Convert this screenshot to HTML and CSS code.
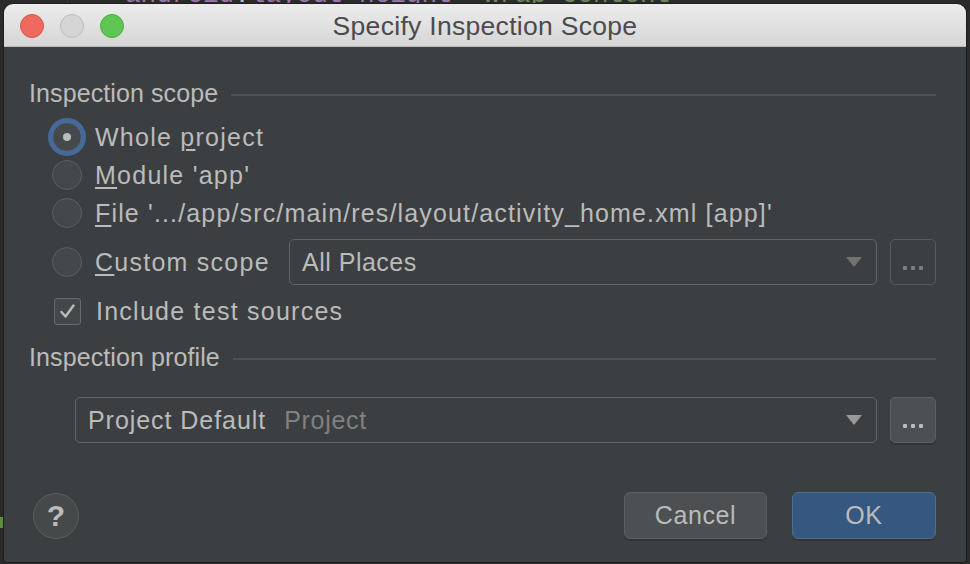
FILE: index.html
```html
<!DOCTYPE html>
<html>
<head>
<meta charset="utf-8">
<link rel="stylesheet" href="styles.css">
</head>
<body>
<div class="editor">
  <div class="gutter-line"></div>
  <div class="code-line"><span class="attr">android</span><span class="punct">:</span><span class="attr">layout_height</span><span class="punct">=</span><span class="str">"wrap_content"</span></div>
  <div class="code-mark"></div>
</div>

<div class="dialog">
  <div class="titlebar">
    <div class="lights">
      <span class="light red"></span>
      <span class="light gray"></span>
      <span class="light green"></span>
    </div>
    <div class="title">Specify Inspection Scope</div>
  </div>

  <div class="body">
    <div class="group-head">
      <span class="group-title">Inspection scope</span>
      <span class="group-line"></span>
    </div>

    <div class="row row-first">
      <span class="radio selected"><span class="dot"></span></span>
      <span class="label">Whole <u>p</u>roject</span>
    </div>
    <div class="row">
      <span class="radio"></span>
      <span class="label"><u>M</u>odule 'app'</span>
    </div>
    <div class="row">
      <span class="radio"></span>
      <span class="label label-file"><u>F</u>ile '.../app/src/main/res/layout/activity_home.xml [app]'</span>
    </div>
    <div class="row row-combo">
      <span class="radio"></span>
      <span class="label label-fixed"><u>C</u>ustom scope</span>
      <div class="combo">
        <span class="combo-text">All Places</span>
        <span class="arrow arrow-dim"></span>
      </div>
      <div class="ellipsis disabled"><i></i><i></i><i></i></div>
    </div>
    <div class="row row-check">
      <span class="checkbox">
        <svg width="19" height="19" viewBox="0 0 19 19"><path d="M3.5 10 L7.5 14.5 L15.5 3.5" fill="none" stroke="#bbbbbb" stroke-width="2.4" stroke-linecap="round" stroke-linejoin="round"/></svg>
      </span>
      <span class="label">Include test sources</span>
    </div>

    <div class="group-head group-head-2">
      <span class="group-title">Inspection profile</span>
      <span class="group-line"></span>
    </div>

    <div class="row-profile">
      <div class="combo combo-profile">
        <span class="combo-text">Project Default</span>
        <span class="combo-sub">Project</span>
        <span class="arrow"></span>
      </div>
      <div class="ellipsis"><i></i><i></i><i></i></div>
    </div>

    <div class="footer">
      <div class="help">?</div>
      <div class="buttons">
        <div class="btn">Cancel</div>
        <div class="btn btn-primary">OK</div>
      </div>
    </div>
  </div>
</div>
</body>
</html>
```

FILE: styles.css
```css
html, body {
  margin: 0;
  padding: 0;
  width: 970px;
  height: 564px;
  overflow: hidden;
  background: #2b2b2b;
}

.editor {
  position: relative;
  height: 564px;
  padding-top: 1px;
  box-sizing: border-box;
}

.gutter-line {
  position: absolute;
  left: 67px;
  top: 0;
  width: 1px;
  height: 8px;
  background: #3a3a3a;
}

.code-mark {
  position: absolute;
  left: 0;
  top: 517px;
  width: 3px;
  height: 11px;
  background: #5d8f3b;
}

.code-line {
  margin-top: -19px;
  margin-left: 125px;
  font-family: "Liberation Mono", monospace;
  font-size: 26px;
  line-height: 26px;
  white-space: nowrap;
}
.attr { color: #9876aa; }
.punct { color: #a9b7c6; }
.str { color: #6a8759; }

.dialog {
  position: absolute;
  left: 4px;
  top: 4px;
  width: 962px;
  height: 558px;
  background: #3c3f41;
  border-radius: 9px 9px 3px 3px;
  overflow: hidden;
  font-family: "Liberation Sans", Arial, sans-serif;
  color: #bbbbbb;
  box-shadow: 0 0 0 1px #1e1e1e;
}

.titlebar {
  height: 42px;
  border-bottom: 1px solid #b9b9b9;
  background: linear-gradient(#ececec, #d6d6d6);
  display: flex;
  align-items: center;
  position: relative;
}

.lights {
  display: flex;
  gap: 16px;
  padding-left: 16px;
  position: absolute;
  left: 0;
  top: 10px;
}
.light {
  width: 22px;
  height: 22px;
  border-radius: 50%;
  border: 1px solid;
}
.red { background: #ee6a5e; border-color: #d8554a; }
.gray { background: #d5d5d5; border-color: #bcbcbc; }
.green { background: #5ec653; border-color: #4aac3f; }

.title {
  flex: 1;
  text-align: center;
  font-size: 26.5px;
  letter-spacing: 0.3px;
  color: #4b4b4b;
  padding-top: 3px;
}

.body {
  padding: 31px 30px 0 25px;
}

.group-head {
  display: flex;
  align-items: center;
  height: 30px;
  font-size: 25px;
  line-height: 30px;
}
.group-title {
  flex: none;
  white-space: nowrap;
  letter-spacing: 0.1px;
}
.group-line {
  flex: 1;
  height: 2px;
  background: #4f5254;
  margin-left: 13px;
  margin-top: 4px;
}

.row {
  display: flex;
  align-items: center;
  height: 38px;
  font-size: 25px;
  line-height: 38px;
}
.row-first {
  margin-top: 10px;
}
.label {
  letter-spacing: 1.25px;
  white-space: nowrap;
}
.label-file {
  letter-spacing: 1.15px;
}
.label u {
  text-decoration-thickness: 1.5px;
  text-underline-offset: 3px;
}

.radio {
  flex: none;
  width: 28px;
  height: 28px;
  border: 1px solid #5c5f60;
  border-radius: 50%;
  background: #43494a;
  margin-left: 23px;
  margin-right: 13px;
  display: flex;
  align-items: center;
  justify-content: center;
}
.radio.selected {
  border-color: #4b6f98;
  box-shadow: 0 0 0 4px #45699a;
  background: #45494b;
}
.dot {
  width: 8px;
  height: 8px;
  border-radius: 50%;
  background: #bbbbbb;
}

.row-combo {
  height: 46px;
  margin-top: 7px;
}
.label-fixed {
  width: 194px;
  flex: none;
}

.combo {
  flex: 1;
  height: 44px;
  border: 1px solid #626466;
  border-radius: 5px;
  display: flex;
  align-items: center;
  padding: 0 14px 0 12px;
  font-size: 25px;
}
.combo-text {
  letter-spacing: 0.5px;
  color: #bbbbbb;
  white-space: nowrap;
}
.combo-sub {
  margin-left: 18px;
  letter-spacing: 0.7px;
  color: #808080;
}
.arrow {
  margin-left: auto;
  width: 0;
  height: 0;
  border-left: 8px solid transparent;
  border-right: 8px solid transparent;
  border-top: 10px solid #999999;
}
.arrow-dim {
  border-top-color: #717171;
}

.ellipsis {
  flex: none;
  margin-left: 13px;
  border: 1px solid #5e6062;
  border-radius: 5px;
  background: #4c5052;
  box-shadow: 0 2px 0 rgba(0, 0, 0, 0.18);
  display: flex;
  align-items: flex-end;
  justify-content: center;
  gap: 4px;
  padding-bottom: 14px;
  box-sizing: border-box;
  height: 46px;
  width: 46px;
}
.ellipsis i {
  width: 4px;
  height: 4px;
  border-radius: 1px;
  background: #bbbbbb;
}
.ellipsis.disabled {
  background: transparent;
  box-shadow: none;
  border-color: #595b5d;
}
.ellipsis.disabled i {
  background: #7d7d7d;
}

.row-check {
  margin-top: 7px;
}
.checkbox {
  flex: none;
  width: 25px;
  height: 25px;
  margin-left: 25px;
  margin-right: 15px;
  border: 1px solid #6a6a6a;
  border-radius: 3px;
  background: #43494a;
  display: flex;
  align-items: center;
  justify-content: center;
}

.group-head-2 {
  margin-top: 12px;
}

.row-profile {
  display: flex;
  align-items: center;
  margin-top: 25px;
  margin-left: 46px;
  height: 46px;
}
.combo-profile .combo-text {
  letter-spacing: 0.95px;
}

.footer {
  display: flex;
  align-items: center;
  justify-content: space-between;
  margin-top: 49px;
  height: 47px;
}
.help {
  width: 44px;
  height: 44px;
  margin-left: 4px;
  border-radius: 50%;
  border: 1px solid #5c5f61;
  background: #45494a;
  display: flex;
  align-items: center;
  justify-content: center;
  font-size: 30px;
  font-weight: bold;
  color: #bbbbbb;
}
.buttons {
  display: flex;
  gap: 25px;
}
.btn {
  width: 141px;
  height: 45px;
  border: 1px solid #5e6062;
  border-radius: 6px;
  background: #4c5052;
  box-shadow: 0 2px 0 rgba(0, 0, 0, 0.18);
  display: flex;
  align-items: center;
  justify-content: center;
  font-size: 25px;
  letter-spacing: 0.6px;
  color: #bbbbbb;
}
.btn-primary {
  width: 142px;
  background: #365880;
  border-color: #4c708c;
}
```
